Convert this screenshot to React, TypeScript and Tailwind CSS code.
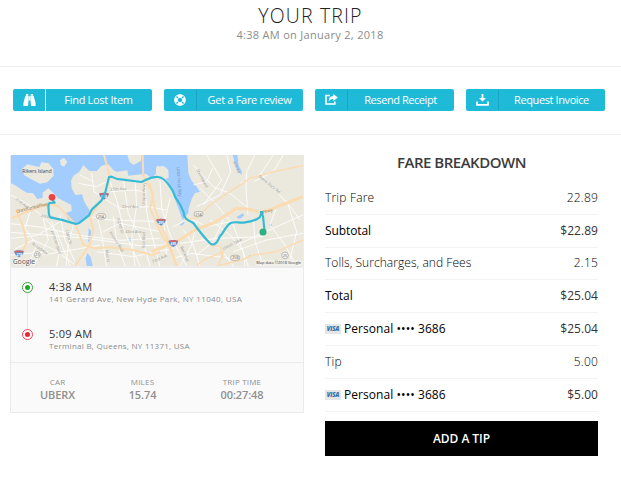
import React from "react";
import { FaLifeRing } from "react-icons/fa";

const sans = "font-['Open_Sans','Noto_Sans',sans-serif]";

function TripMap() {
  const lbl = { fontFamily: "Open Sans, sans-serif", fontSize: 16, fill: "#a09e99" };
  return (
    <svg className="block h-[111px] w-[292px]" viewBox="33 30 876 333" preserveAspectRatio="none">
      <rect x="33" y="30" width="876" height="333" fill="#ebe8de" />
      <g fill="#a3ccff">
        <path d="M33 30H562L565 85L575 108L590 125L600 140L584 145L576 160L566 190L565 205L555 215L548 225L535 190L520 150L510 120L497 100L500 70L470 62L468 86L455 100L438 86L385 92L382 76L350 80L340 75L325 58L305 62L290 78L268 78L250 60L238 80L220 92L213 108L215 130L226 150L246 148L253 170L262 185L272 200L262 216L243 230L228 237L205 225L195 205L215 198L214 180L175 160L158 142L145 130L128 143L128 158L112 162L100 145L80 143L62 132L48 122L33 115Z" />
        <path d="M698 30L712 30L716 62L726 80L724 90L710 72ZM711 215L728 205L733 211L720 221L711 219ZM540 237L555 228L552 236L543 243ZM266 250L274 258L270 285L264 292ZM262 325L272 335L278 363L260 363L257 340Z" />
        <circle cx="389" cy="284" r="5" /><circle cx="812" cy="240" r="4" /><circle cx="750" cy="333" r="3" />
      </g>
      <g fill="#ebe8de">
        <path d="M66 72L82 58L118 66L124 52L146 55L160 72L161 92L142 112L120 116L92 102L72 90ZM468 68L490 62L505 75L506 98L492 103L478 88L468 84ZM180 45L192 38L202 50L192 65L182 60Z" />
        <path d="M382 30H425L423 48L400 60L388 50Z" />
      </g>
      <g fill="none" stroke="#fff" strokeWidth="2.5">
        <path d="M33 150L80 175L135 220L170 260L210 363M90 200L75 250L110 300L85 363M33 236L120 246L230 270L360 286L480 280M33 262L240 278L420 302L500 300M33 280L110 272L180 230M45 312L100 285L165 315L230 363M100 363L145 285L130 220M155 230L180 310L170 363M180 210L195 285L225 350M220 240L205 300L198 363M130 330L300 300M33 330L145 320M270 215L330 225L500 230M310 160L360 190L440 185L500 195M330 110L350 165L370 250L420 363M370 105L385 205L432 300L450 363M405 108L410 180L395 280L405 363M435 105L440 200L450 250L480 363M290 205L305 270L320 363M340 215L350 290L375 363M330 140L400 135L430 140M310 260L360 235L480 260M290 320L400 335L520 310M275 85L282 140L300 152M235 115L290 125L316 112M240 90L280 110" />
        <path d="M480 105L485 190L510 270L560 363M510 160L492 240L500 330M520 245L570 220L620 245L690 230M550 255L580 300L600 363M590 230L575 300L540 363M600 130L650 180L700 240L745 363M580 60L640 125L690 145L745 190M620 30L665 105L640 140L610 180M680 30L692 80L660 150L590 185M765 30L740 80L738 135L744 210M720 115L780 90L820 30M780 85L830 140L875 190L900 225M850 30L820 80L760 110M630 225L690 270L730 320L735 363M670 225L640 290L590 330M760 220L765 290L790 363M710 300L830 245L909 210M830 185L810 240L855 300L890 363M700 320L800 285L909 265M600 280L660 310L700 363M860 165L890 260L865 363M580 120L620 110L638 70M540 295L650 280L790 275M520 340L575 325L690 340" />
      </g>
      <g fill="none" stroke="#fbdcb2" strokeWidth="6" strokeLinejoin="round">
        <path d="M33 220L70 205L145 177L175 184L200 210L228 240L250 300L284 310L330 307L400 315L455 330L480 320M48 195L68 240L80 292L68 318M312 30L330 96L316 150L270 215L280 255L268 300L225 363M428 30L430 90L460 150L450 190L480 260L505 300L530 363M450 115L463 185L482 240L510 300L530 363" />
        <path d="M455 320L530 290L585 255L645 232L710 190L750 193L785 204L845 180L909 155" strokeWidth="9" />
        <path d="M550 225L590 218L630 180L690 140L750 100L830 78L909 62M590 363L610 345L670 320L655 363M630 300L660 305L670 340M650 363L725 345L760 330L830 320L909 285" strokeWidth="4.5" />
      </g>
      <g {...lbl}>
        <text x="67" y="84" fill="#3e5268" style={{ font: "16px Open Sans" }} textLength="88">Rikers Island</text>
        <text transform="translate(50 204) rotate(-14)" fill="#a77a42" fontSize="14" textLength="98">Grand Central Pkwy</text>
        <text transform="translate(45 164) rotate(37)" fontSize="12">21st Ave</text>
        <text transform="translate(122 216) rotate(8)" fontSize="12">Astoria</text>
        <text transform="translate(95 298) rotate(35)" fontSize="12">Broadway</text>
        <text transform="translate(154 259) rotate(72)" fontSize="12">Junction Blvd</text>
        <text transform="translate(195 255) rotate(73)" fontSize="12">108th St</text>
        <text transform="translate(331 137) rotate(-2)" fontSize="12">25th Ave</text>
        <text x="365" y="190" fontSize="12">32nd Ave</text>
        <text x="376" y="263" fontSize="12">43rd Ave</text>
        <text transform="translate(349 218) rotate(72)" fontSize="12">162nd St</text>
        <text transform="translate(328 263) rotate(58)" fontSize="12">Kissena Blvd</text>
        <text transform="translate(434 310) rotate(-88)" fontSize="12">Bell Blvd</text>
        <text transform="translate(434 182) rotate(-88)" fontSize="12">Utopia Pkwy</text>
        <text transform="translate(317 314) rotate(85)" fontSize="11">Main St</text>
        <text transform="translate(530 66) rotate(86)" fill="#6f8fae" fontSize="13">Little Neck Bay</text>
        <text transform="translate(589 75) rotate(62)" fontSize="12">Shoreward</text>
        <text transform="translate(699 51) rotate(66)" fontSize="12">Mill Rd</text>
        <text transform="translate(775 95) rotate(40)" fontSize="12">Stone Rock Rd</text>
        <text transform="translate(670 316) rotate(-28)" fontSize="12">Union Tpke</text>
        <text transform="translate(541 306) rotate(68)" fontSize="12">Bell Blvd</text>
        <text transform="translate(458 355) rotate(-25)" fontSize="12">73rd Ave</text>
        <text transform="translate(788 206) rotate(-14)" fill="#a77a42" fontSize="13">Pkwy</text>
      </g>
      <g fill="#f5f4ef" stroke="#a5a299" strokeWidth="2">
        <rect x="289" y="206" width="28" height="16" rx="8" /><rect x="582" y="200" width="27" height="15" rx="7" />
        <rect x="692" y="331" width="27" height="15" rx="7" /><circle cx="855" cy="331" r="10" /><circle cx="112" cy="329" r="9" />
      </g>
      <g {...lbl} fontSize="11" fill="#66645e">
        <text x="293" y="218">25A</text><text x="586" y="212">25A</text>
        <text x="696" y="343">25B</text><text x="849" y="335">25</text><text x="106" y="333">25</text>
      </g>
      {[[312, 153, "678"], [483, 231, "295"], [520, 295, "495"], [57, 326, "278"]].map(([x, y, t]) => (
        <g key={String(t)} transform={`translate(${x} ${y})`}>
          <path d="M-14-8Q0-12 14-8Q16 3 0 11Q-16 3-14-8Z" fill="#5b85c4" stroke="#d8e1ec" />
          <path d="M-13-8Q0-12 13-8L14-4H-14Z" fill="#cc6a6e" />
          <text y="6" textAnchor="middle" fill="#fff" style={{ font: "bold 10px Open Sans" }}>{t}</text>
        </g>
      ))}
      <path d="M156 158L160 168L164 173L148 174Q144 180 146 195Q146 212 151 217Q190 224 228 237Q237 237 244 229L267 211L276 193L304 167L316 142L327 96L334 95Q350 104 369 104L424 111C440 105 451 94 475 96Q492 98 508 122L518 137Q525 160 540 178L551 202C551 220 560 224 580 234Q610 275 630 295Q640 302 647 295C658 285 655 275 666 267Q680 242 692 234C707 228 718 235 735 232Q760 231 779 217L785 203L789 215L794 260" fill="none" stroke="#35bbd6" strokeWidth="6.5" strokeLinejoin="round" strokeLinecap="round" />
      <rect x="780" y="198" width="10" height="10" fill="#36b7d0" />
      <circle cx="156" cy="157" r="10" fill="#ee4447" /><circle cx="789" cy="261" r="10.5" fill="#2eaf86" />
      <text x="38" y="356" textLength="68" fill="#707070" stroke="#fff" strokeWidth="3" paintOrder="stroke" style={{ font: "600 22px Open Sans" }}>Google</text>
      <rect x="766" y="345" width="143" height="18" fill="#f3f1eb" opacity=".8" />
      <text x="769" y="357" textLength="134" lengthAdjust="spacingAndGlyphs" fill="#393939" style={{ font: "13px Open Sans" }}>Map data ©2018 Google</text>
    </svg>
  );
}

function Binoculars() {
  return (
    <svg className="h-[12px] w-[13px]" viewBox="0 0 13 12" fill="currentColor">
      <path d="M3 0H5.3V1.5H3ZM7.7 0H10V1.5H7.7ZM2.4 1.8H5.5V7L5 12H.4V9ZM7.5 1.8H10.6L12.6 9V12H8L7.5 7ZM5.8 2.2H7.2V6.5H5.8Z" />
    </svg>
  );
}
function Share() {
  return (
    <svg className="h-[11px] w-[13px]" viewBox="0 0 13 11">
      <path d="M5 1.5H1V10H9.8V7.5" fill="none" stroke="currentColor" strokeWidth="1.6" />
      <path d="M8.3 0L12.8 3.5L8.3 7V5Q5 4.6 3.8 7.5Q3.3 2.2 8.3 2Z" fill="currentColor" />
    </svg>
  );
}
function Download() {
  return (
    <svg className="h-[12px] w-[13px]" viewBox="0 0 13 12">
      <path d="M5.6 0H7.4V4H10L6.5 7.5L3 4H5.6Z" fill="currentColor" />
      <path d="M1 7.5V10.8H12V7.5" fill="none" stroke="currentColor" strokeWidth="1.7" />
    </svg>
  );
}

function Action({ icon, label, spacing, divider = "h-5 bg-[#1aa5c4]" }: { icon: React.ReactNode; label: string; spacing: string; divider?: string }) {
  return (
    <button className="flex h-[22px] w-[139px] items-center rounded-[2px] bg-[#20bad9] text-white">
      <span className="flex w-8 shrink-0 items-center justify-center pb-px">{icon}</span>
      <span className={`w-px shrink-0 ${divider}`} />
      <span className={`flex-1 pb-px pr-px whitespace-nowrap text-center text-[11px] leading-[20px] font-medium ${spacing}`}>{label}</span>
    </button>
  );
}

function Stop({ time, address, ring, dot, spacing }: { time: string; address: string; ring: string; dot: string; spacing: string }) {
  return (
    <div className="flex h-[47px]">
      <div className="flex w-[33px] flex-col items-center">
        <span className={`flex size-[11px] shrink-0 items-center justify-center rounded-full border bg-white ${ring}`}>
          <span className={`size-[5px] rounded-full ${dot}`} />
        </span>
      </div>
      <div className="-mt-px ml-[5px] whitespace-nowrap">
        <div className="text-[11px] leading-[12px] tracking-[0.3px] text-[#333]">{time}</div>
        <div className={`text-[8px] leading-[11px] text-[#8c8c8c] ${spacing}`}>{address}</div>
      </div>
    </div>
  );
}

function Stat({ label, value, pad }: { label: string; value: string; pad: string }) {
  return (
    <div className={`text-center text-[#8f8f8f] ${pad}`}>
      <div className="text-[8px] leading-[12px] tracking-[0.2px]">{label}</div>
      <div className="text-[11px] leading-[14px] font-semibold tracking-[-0.1px]">{value}</div>
    </div>
  );
}

function Visa() {
  return (
    <span className="mr-[3px] flex h-[10px] w-4 items-center justify-center bg-[#e4e6e7] text-[6px] leading-none font-extrabold tracking-[-0.2px] text-[#376da5] italic">VISA</span>
  );
}

function Row({ label, value, card = false, strong = false, spacing = "tracking-[0px]" }: { label: string; value: string; card?: boolean; strong?: boolean; spacing?: string }) {
  return (
    <div className="flex h-[32.8px] items-center justify-between border-b border-[#f3f3f3] text-[12px]">
      <span className={`flex items-center whitespace-nowrap ${strong ? "text-black" : "font-light text-black"} ${spacing}`}>{card && <Visa />}{label}</span>
      <span className={strong ? "tracking-[0.05px] text-[#333]" : "font-light tracking-[0.2px] text-black"}>{value}</span>
    </div>
  );
}

export default function App() {
  return (
    <main className={`h-[481px] w-[621px] overflow-hidden bg-white ${sans}`}>
      <header className="h-[67px] border-b border-[#eee] pt-[3px] text-center">
        <h1 className="text-[19.5px] leading-[25px] font-light tracking-[1.15px] text-[#222]">YOUR TRIP</h1>
        <p className="pr-px text-[11px] leading-[14px] tracking-[0.3px] text-[#8c8c8c]">4:38 AM on January 2, 2018</p>
      </header>
      <nav className="flex h-[68px] gap-3 border-b border-[#eee] pt-[22px] pl-[13px]">
        <Action icon={<Binoculars />} label="Find Lost Item" spacing="tracking-[-0.3px]" divider="h-[22px] bg-white" />
        <Action icon={<FaLifeRing size={12} />} label="Get a Fare review" spacing="tracking-[-0.3px]" />
        <Action icon={<Share />} label="Resend Receipt" spacing="tracking-[-0.43px]" />
        <Action icon={<Download />} label="Request Invoice" spacing="tracking-[-0.4px]" />
      </nav>
      <div className="flex gap-[21px] pl-[10px]">
        <section className="mt-5 h-[258px] w-[294px] border border-t-0 border-[#ebebeb] bg-[#fafafa]">
          <TripMap />
          <div className="relative h-[97px] border-t-2 border-b border-[#ebebeb] pt-[14px]">
            <span className="absolute top-[25px] left-[16px] h-9 w-px bg-[#e8e8e8]" />
            <Stop time="4:38 AM" address="141 Gerard Ave, New Hyde Park, NY 11040, USA" ring="border-[#37a33b]" dot="bg-[#24a52b]" spacing="tracking-[0.35px]" />
            <Stop time="5:09 AM" address="Terminal B, Queens, NY 11371, USA" ring="border-[#f34555]" dot="bg-[#f32232]" spacing="tracking-[0.26px]" />
          </div>
          <div className="flex pt-[13px]">
            <Stat label="CAR" value="UBERX" pad="w-[93px]" />
            <Stat label="MILES" value="15.74" pad="w-[77px]" />
            <Stat label="TRIP TIME" value="00:27:48" pad="w-[122px]" />
          </div>
        </section>
        <section className="w-[273px] pt-[17px]">
          <h2 className="h-[30px] text-center text-[15px] leading-[21px] font-semibold tracking-[-0.5px] text-[#3c3c3c]">FARE BREAKDOWN</h2>
          <Row label="Trip Fare" value="22.89" spacing="tracking-[0.2px]" />
          <Row label="Subtotal" value="$22.89" strong spacing="tracking-[-0.1px]" />
          <Row label="Tolls, Surcharges, and Fees" value="2.15" spacing="tracking-[0.06px]" />
          <Row label="Total" value="$25.04" strong />
          <Row label="Personal •••• 3686" value="$25.04" strong card spacing="tracking-[0.06px]" />
          <Row label="Tip" value="5.00" spacing="tracking-[0.2px]" />
          <Row label="Personal •••• 3686" value="$5.00" strong card spacing="tracking-[0.06px]" />
          <button className="mt-[9px] block h-[35px] w-full bg-black pt-px text-center text-[12px] font-semibold tracking-[-0.05px] text-white">ADD A TIP</button>
        </section>
      </div>
    </main>
  );
}
